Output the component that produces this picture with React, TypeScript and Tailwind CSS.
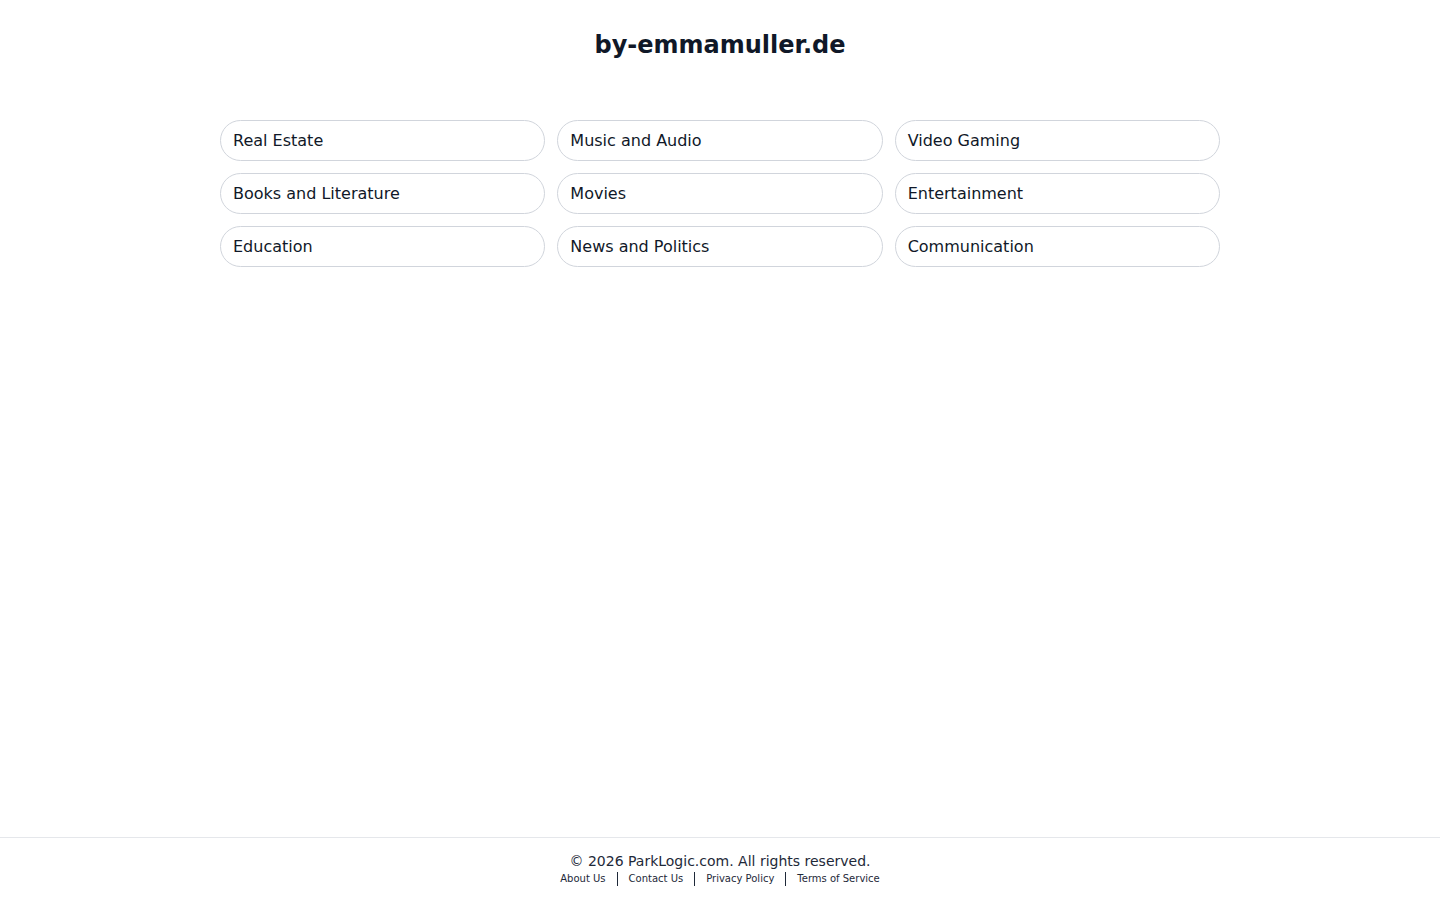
const topics = [
  'Real Estate',
  'Music and Audio',
  'Video Gaming',
  'Books and Literature',
  'Movies',
  'Entertainment',
  'Education',
  'News and Politics',
  'Communication',
];

const links = ['About Us', 'Contact Us', 'Privacy Policy', 'Terms of Service'];

export default function App() {
  return (
    <div
      className="flex min-h-screen flex-col bg-white text-gray-900"
      style={{ fontFamily: '"DejaVu Sans", sans-serif' }}
    >
      <main className="flex-1 pt-[29px]">
        <h1 className="text-center text-2xl font-bold leading-8 text-gray-900">
          by-emmamuller.de
        </h1>
        <div className="mx-auto mt-[59px] grid w-[1000px] grid-cols-3 gap-3">
          {topics.map((t) => (
            <a
              key={t}
              href="#"
              className="flex h-[41px] items-center rounded-full border border-gray-300 px-3 text-base text-gray-900"
            >
              {t}
            </a>
          ))}
        </div>
      </main>

      <footer className="border-t border-gray-200 pb-[13px] pt-[13px] text-center">
        <p className="text-sm leading-5 text-gray-800">
          © 2026 ParkLogic.com. All rights reserved.
        </p>
        <div className="flex items-center justify-center text-[10px] leading-4 text-gray-800">
          {links.map((l, i) => (
            <span key={l} className="flex items-center">
              {i > 0 ? <span className="mx-[11px] h-[14px] w-px bg-gray-800" /> : null}
              <a href="#">{l}</a>
            </span>
          ))}
        </div>
      </footer>
    </div>
  );
}
